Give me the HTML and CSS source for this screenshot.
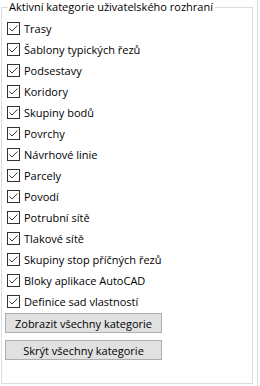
FILE: index.html
```html
<!DOCTYPE html>
<html lang="cs">
<head>
    <meta charset="UTF-8">
    <meta name="viewport" content="width=device-width, initial-scale=1.0">
    <title>Aktivní kategorie</title>
    <link rel="stylesheet" href="styles.css">
</head>
<body>
    <div class="panel">
        <fieldset class="group">
            <legend>Aktivní kategorie uživatelského rozhraní</legend>

            <div class="list">
                <label class="row"><span class="box"><svg viewBox="0 0 11 11"><path d="M1.5 5.5 L4 8 L9.5 2.5"/></svg></span>Trasy</label>
                <label class="row"><span class="box"><svg viewBox="0 0 11 11"><path d="M1.5 5.5 L4 8 L9.5 2.5"/></svg></span>Šablony typických řezů</label>
                <label class="row"><span class="box"><svg viewBox="0 0 11 11"><path d="M1.5 5.5 L4 8 L9.5 2.5"/></svg></span>Podsestavy</label>
                <label class="row"><span class="box"><svg viewBox="0 0 11 11"><path d="M1.5 5.5 L4 8 L9.5 2.5"/></svg></span>Koridory</label>
                <label class="row"><span class="box"><svg viewBox="0 0 11 11"><path d="M1.5 5.5 L4 8 L9.5 2.5"/></svg></span>Skupiny bodů</label>
                <label class="row"><span class="box"><svg viewBox="0 0 11 11"><path d="M1.5 5.5 L4 8 L9.5 2.5"/></svg></span>Povrchy</label>
                <label class="row"><span class="box"><svg viewBox="0 0 11 11"><path d="M1.5 5.5 L4 8 L9.5 2.5"/></svg></span>Návrhové linie</label>
                <label class="row"><span class="box"><svg viewBox="0 0 11 11"><path d="M1.5 5.5 L4 8 L9.5 2.5"/></svg></span>Parcely</label>
                <label class="row"><span class="box"><svg viewBox="0 0 11 11"><path d="M1.5 5.5 L4 8 L9.5 2.5"/></svg></span>Povodí</label>
                <label class="row"><span class="box"><svg viewBox="0 0 11 11"><path d="M1.5 5.5 L4 8 L9.5 2.5"/></svg></span>Potrubní sítě</label>
                <label class="row"><span class="box"><svg viewBox="0 0 11 11"><path d="M1.5 5.5 L4 8 L9.5 2.5"/></svg></span>Tlakové sítě</label>
                <label class="row"><span class="box"><svg viewBox="0 0 11 11"><path d="M1.5 5.5 L4 8 L9.5 2.5"/></svg></span>Skupiny stop příčných řezů</label>
                <label class="row"><span class="box"><svg viewBox="0 0 11 11"><path d="M1.5 5.5 L4 8 L9.5 2.5"/></svg></span>Bloky aplikace AutoCAD</label>
                <label class="row"><span class="box"><svg viewBox="0 0 11 11"><path d="M1.5 5.5 L4 8 L9.5 2.5"/></svg></span>Definice sad vlastností</label>
            </div>

            <div class="buttons">
                <button type="button" class="btn">Zobrazit všechny kategorie</button>
                <button type="button" class="btn">Skrýt všechny kategorie</button>
            </div>
        </fieldset>
        <div class="edge"></div>
    </div>
</body>
</html>
```

FILE: styles.css
```css
body {
    margin: 0;
    background: #ffffff;
    font-family: "Open Sans", "Noto Sans", sans-serif;
    font-size: 11px;
    color: #000000;
}
.panel {
    display: flex;
    height: 386px;
}
.group {
    box-sizing: border-box;
    width: 252px;
    height: 384px;
    margin: 0 0 0 1px;
    padding: 0 0 0 3px;
    border: 1px solid #dcdcdc;
    min-width: 0;
}
.group legend {
    padding: 0 2px 0 1px;
    margin-left: 3px;
    line-height: 14px;
}
.list {
    padding-top: 4px;
}
.row {
    display: flex;
    align-items: center;
    height: 21px;
    margin-left: 2px;
    gap: 4px;
    white-space: nowrap;
}
.box {
    box-sizing: border-box;
    width: 13px;
    height: 13px;
    border: 1px solid #333333;
    background: #ffffff;
    display: flex;
}
.box svg {
    width: 11px;
    height: 11px;
}
.box path {
    fill: none;
    stroke: #3c3c3c;
    stroke-width: 1;
}
.buttons {
    display: flex;
    flex-direction: column;
    gap: 7px;
    padding-top: 1px;
}
.btn {
    box-sizing: border-box;
    width: 157px;
    height: 20px;
    padding: 0;
    background: #e1e1e1;
    border: 1px solid #adadad;
    border-radius: 0;
    font-family: "Open Sans", "Noto Sans", sans-serif;
    font-size: 11px;
    color: #000000;
}
.edge {
    width: 1px;
    margin-left: 4px;
    background: #dcdcdc;
}
```
